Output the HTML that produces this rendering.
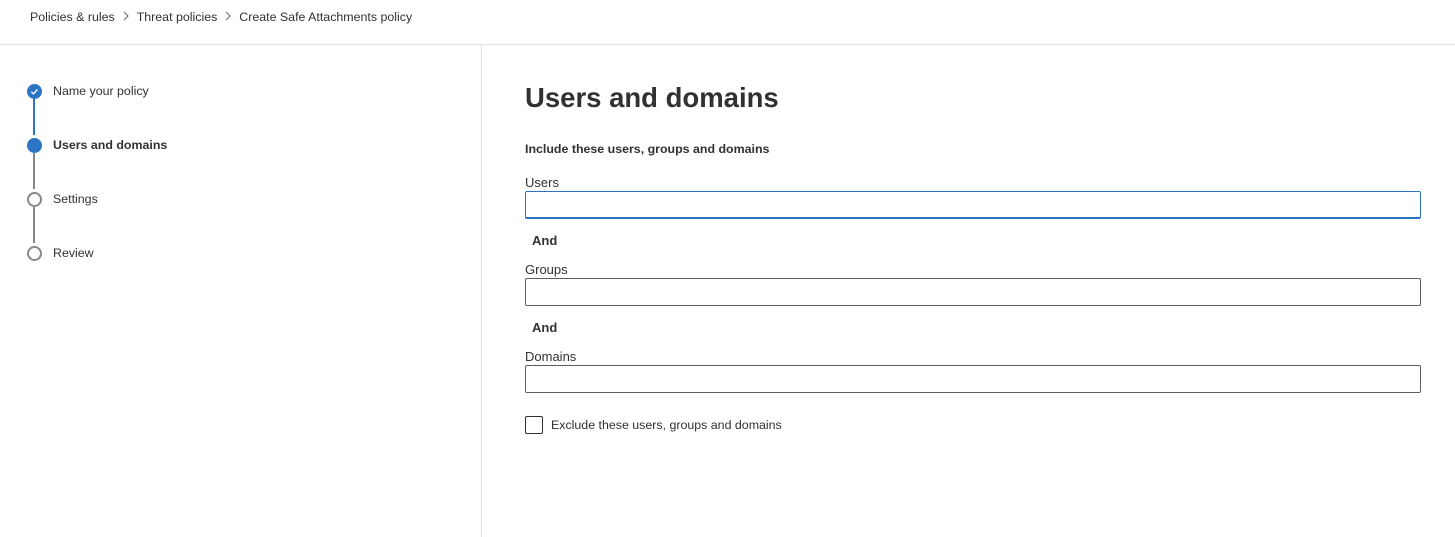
<!DOCTYPE html>
<html><head><meta charset="utf-8">
<style>
*{box-sizing:border-box;margin:0;padding:0}
body{width:1455px;height:537px;background:#fff;font-family:"Segoe UI","Liberation Sans",sans-serif;color:#323130;position:relative;overflow:hidden}
.abs{position:absolute}
.bc{top:10px;left:30px;font-size:12.4px;color:#323130;white-space:nowrap}
.bc span{display:inline-block}
.sep{color:#777;margin:0 7px;font-size:12px}
.hr{top:44px;left:0;width:1455px;height:1px;background:#e1dfdd}
.vr{top:45px;left:481px;width:1px;height:492px;background:#e1dfdd}
.step{left:53px;font-size:12.4px;color:#323130}
.circ{width:15px;height:15px;border-radius:50%;left:27px}
.line{left:33px;width:2px}
h1{position:absolute;left:525px;top:82px;font-size:27.5px;font-weight:700;color:#323130}
.lbl{left:525px;font-size:13px;color:#323130}
.box{left:525px;width:896px;height:28px;border:1px solid #605e5c;border-radius:2px}
.and{left:532px;font-size:13px;font-weight:700}
</style></head><body>
<div class="abs bc"><span>Policies &amp; rules</span><span class="sep"><svg width="8" height="10" viewBox="0 0 8 10"><path d="M2 1l4 4-4 4" fill="none" stroke="#666" stroke-width="1"/></svg></span><span>Threat policies</span><span class="sep"><svg width="8" height="10" viewBox="0 0 8 10"><path d="M2 1l4 4-4 4" fill="none" stroke="#666" stroke-width="1"/></svg></span><span>Create Safe Attachments policy</span></div>
<div class="abs hr"></div>
<div class="abs vr"></div>

<div class="abs line" style="top:99px;height:36px;background:#2b74c4"></div>
<div class="abs line" style="top:153px;height:36px;background:#8a8886"></div>
<div class="abs line" style="top:207px;height:36px;background:#8a8886"></div>
<div class="abs circ" style="top:84px;background:#2b74c4"><svg width="15" height="15" viewBox="0 0 15 15" style="display:block"><path d="M4.3 7.8l2.2 2 4-4.3" fill="none" stroke="#fff" stroke-width="1.3"/></svg></div>
<div class="abs circ" style="top:138px;background:#2b74c4"></div>
<div class="abs circ" style="top:192px;border:2px solid #8a8886;background:#fff"></div>
<div class="abs circ" style="top:246px;border:2px solid #8a8886;background:#fff"></div>
<div class="abs step" style="top:84px">Name your policy</div>
<div class="abs step" style="top:138px;font-weight:700">Users and domains</div>
<div class="abs step" style="top:192px">Settings</div>
<div class="abs step" style="top:246px">Review</div>

<h1>Users and domains</h1>
<div class="abs" style="left:525px;top:142px;font-size:12.4px;font-weight:700">Include these users, groups and domains</div>
<div class="abs lbl" style="top:175px">Users</div>
<div class="abs box" style="top:191px;border-color:#2b74c4;border-bottom:2px solid #2b74c4"></div>
<div class="abs and" style="top:233px">And</div>
<div class="abs lbl" style="top:262px">Groups</div>
<div class="abs box" style="top:278px"></div>
<div class="abs and" style="top:320px">And</div>
<div class="abs lbl" style="top:349px">Domains</div>
<div class="abs box" style="top:365px"></div>
<div class="abs" style="left:525px;top:416px;width:18px;height:18px;border:1px solid #323130;border-radius:2px"></div>
<div class="abs" style="left:551px;top:418px;font-size:12.4px">Exclude these users, groups and domains</div>
</body></html>
